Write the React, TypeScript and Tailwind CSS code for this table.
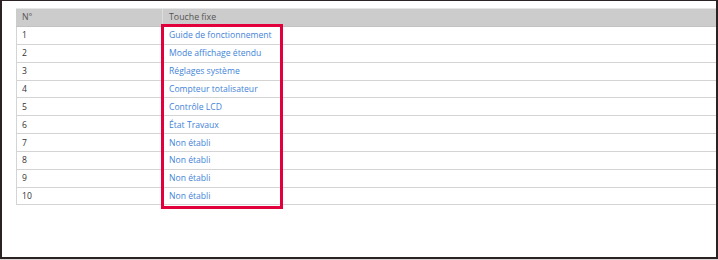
import React from 'react';

const rows = [
  'Guide de fonctionnement',
  'Mode affichage étendu',
  'Réglages système',
  'Compteur totalisateur',
  'Contrôle LCD',
  'État Travaux',
  'Non établi',
  'Non établi',
  'Non établi',
  'Non établi',
];

export default function App() {
  return (
    <div className="w-[718px] h-[260px] bg-[#d9d6d6] font-['Open_Sans',sans-serif]">
      <div className="relative w-[718px] h-[259px] bg-white border-l-2 border-t border-r-2 border-b-2 border-[#2b2323] pl-[14px] pt-[7px]">
        <div className="border-t border-[#e6e6e6]">
          <div className="flex h-[18px] items-center bg-[#cccccc] border-b border-[#c2c2c2] text-[8.8px] text-[#555]">
            <div className="w-[147px] h-full flex items-center pl-[6px] pt-[1px] border-r border-[#dedede]">N°</div>
            <div className="flex-1 pl-[6px] pt-[1px]">Touche fixe</div>
          </div>
          {rows.map((label, i) => (
            <div key={i} className="flex h-[17.85px] items-center border-b border-l border-[#d4d4d4] text-[8.6px] pt-[1px]">
              <div className="w-[146px] pl-[5px] text-[#333]">{i + 1}</div>
              <div className="flex-1 pl-[6px] text-[#3f84d8]">{label}</div>
            </div>
          ))}
        </div>
        <div className="absolute left-[159px] top-[23px] w-[122px] h-[185px] border-[3px] border-[#e2003c]" />
      </div>
    </div>
  );
}
